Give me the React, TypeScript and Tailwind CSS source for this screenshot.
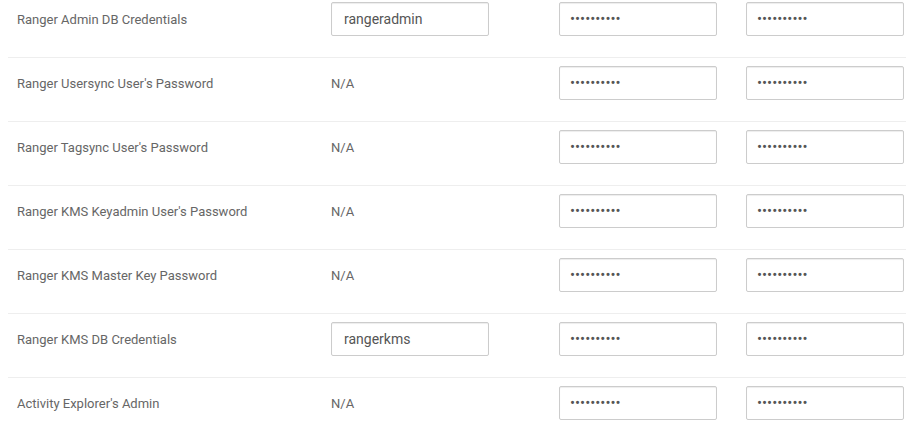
const rows: { label: string; user: string | null }[] = [
  { label: "Ranger Admin DB Credentials", user: "rangeradmin" },
  { label: "Ranger Usersync User's Password", user: null },
  { label: "Ranger Tagsync User's Password", user: null },
  { label: "Ranger KMS Keyadmin User's Password", user: null },
  { label: "Ranger KMS Master Key Password", user: null },
  { label: "Ranger KMS DB Credentials", user: "rangerkms" },
  { label: "Activity Explorer's Admin", user: null },
];

const inputCls =
  "h-[34px] w-[158px] rounded-[2px] border border-[#ccc] bg-white text-[#555] shadow-[inset_0_1px_1px_rgba(0,0,0,0.075)] outline-none";

export default function App() {
  return (
    <div className="min-h-[426px] w-[906px] overflow-hidden bg-white font-['Roboto',sans-serif]">
      {rows.map((row, i) => (
        <div
          key={row.label}
          className={
            i === 0
              ? "ml-[8px] flex items-center pt-[2px] pb-[21px]"
              : "ml-[8px] flex items-center border-t border-[#eee] pt-[8px] pb-[21px]"
          }
        >
          <div className="w-[323px] pt-[1px] pl-[9px] text-[13px] text-[#666]">{row.label}</div>
          <div className="flex w-[228px]">
            {row.user ? (
              <input readOnly value={row.user} className={inputCls + " px-[12px] text-[14px]"} />
            ) : (
              <span className="pt-[1px] text-[13px] text-[#666]">N/A</span>
            )}
          </div>
          <div className="flex w-[187px]">
            <input type="password" readOnly value="**********" className={inputCls + " px-[10px] text-[15px]"} />
          </div>
          <div className="flex">
            <input type="password" readOnly value="**********" className={inputCls + " px-[10px] text-[15px]"} />
          </div>
        </div>
      ))}
    </div>
  );
}
